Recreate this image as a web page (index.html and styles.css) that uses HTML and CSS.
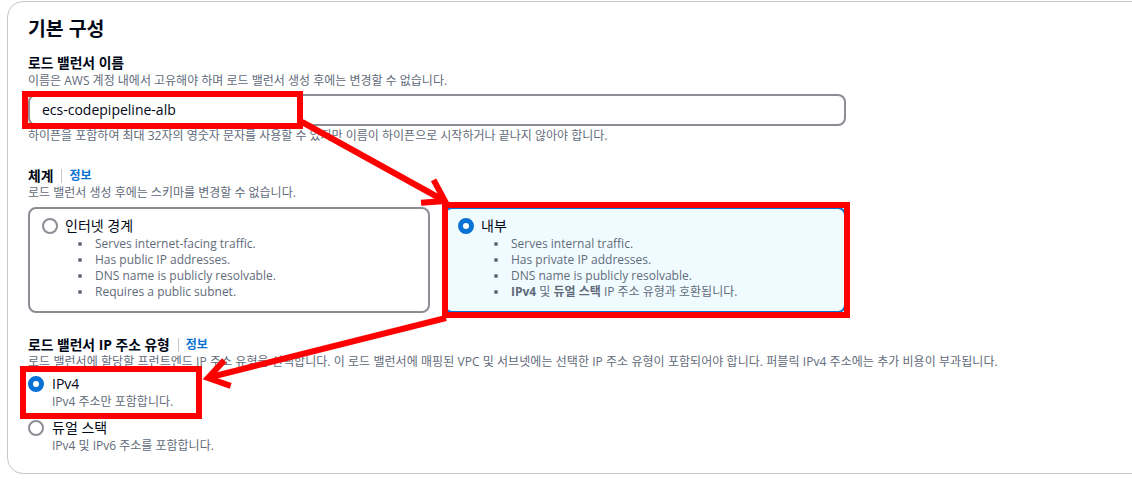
FILE: index.html
```html
<!DOCTYPE html>
<html lang="ko">
<head>
<meta charset="utf-8">
<title>기본 구성</title>
<link rel="stylesheet" href="styles.css">
</head>
<body>
<div class="panel">
  <h2 class="title">기본 구성</h2>

  <div class="field f1">
    <div class="label">로드 밸런서 이름</div>
    <div class="desc d1">이름은 AWS 계정 내에서 고유해야 하며 로드 밸런서 생성 후에는 변경할 수 없습니다.</div>
    <div class="input">ecs-codepipeline-alb</div>
    <div class="desc hint">하이픈을 포함하여 최대 32자의 영숫자 문자를 사용할 수 있지만 이름이 하이픈으로 시작하거나 끝나지 않아야 합니다.</div>
  </div>

  <div class="field f2">
    <div class="label">체계<span class="sep"></span><span class="info">정보</span></div>
    <div class="desc">로드 밸런서 생성 후에는 스키마를 변경할 수 없습니다.</div>
    <div class="tiles">
      <div class="tile">
        <div class="tile-head"><span class="radio"></span><span class="tile-title">인터넷 경계</span></div>
        <ul class="bul">
          <li>Serves internet-facing traffic.</li>
          <li>Has public IP addresses.</li>
          <li>DNS name is publicly resolvable.</li>
          <li>Requires a public subnet.</li>
        </ul>
      </div>
      <div class="tile sel">
        <div class="tile-head"><span class="radio on"></span><span class="tile-title">내부</span></div>
        <ul class="bul">
          <li>Serves internal traffic.</li>
          <li>Has private IP addresses.</li>
          <li>DNS name is publicly resolvable.</li>
          <li><span><b>IPv4</b> 및 <b>듀얼 스택</b> IP 주소 유형과 호환됩니다.</span></li>
        </ul>
      </div>
    </div>
  </div>

  <div class="field f3">
    <div class="label">로드 밸런서 IP 주소 유형<span class="sep"></span><span class="info">정보</span></div>
    <div class="desc wide">로드 밸런서에 할당할 프런트엔드 IP 주소 유형을 선택합니다. 이 로드 밸런서에 매핑된 VPC 및 서브넷에는 선택한 IP 주소 유형이 포함되어야 합니다. 퍼블릭 IPv4 주소에는 추가 비용이 부과됩니다.</div>
    <div class="opt first">
      <span class="radio on"></span>
      <span class="opt-title">IPv4</span>
      <span class="desc opt-desc">IPv4 주소만 포함합니다.</span>
    </div>
    <div class="opt">
      <span class="radio"></span>
      <span class="opt-title">듀얼 스택</span>
      <span class="desc opt-desc">IPv4 및 IPv6 주소를 포함합니다.</span>
    </div>
  </div>
</div>

<svg class="marks" width="1132" height="479" viewBox="0 0 1132 479" xmlns="http://www.w3.org/2000/svg">
  <g fill="none" stroke="#ff0000" stroke-width="6" stroke-linejoin="miter">
    <rect x="25" y="94" width="275" height="32"/>
    <rect x="445" y="205" width="402" height="110"/>
    <rect x="23" y="369" width="176" height="47"/>
    <line x1="302" y1="122" x2="443" y2="200"/>
    <polyline points="433.6,179.8 445,201 421,202.8"/>
    <line x1="446" y1="318" x2="211" y2="377"/>
    <polyline points="224.3,360.4 208,378 230.7,385.8"/>
  </g>
</svg>
</body>
</html>
```

FILE: styles.css
```css
html, body {
  margin: 0;
  background: #ffffff;
}

body {
  position: relative;
  width: 1132px;
  height: 479px;
  overflow: hidden;
  font-family: "Open Sans", "Noto Sans CJK KR", sans-serif;
  color: #000716;
}

.panel {
  margin: 1px 0 0 7px;
  width: 1180px;
  border: 1px solid #c6c6cd;
  border-radius: 16px;
  padding: 16px 20px 19px;
}

.title {
  margin: 0;
  font-size: 19.4px;
  line-height: 22px;
  font-weight: 700;
}

.label {
  display: flex;
  align-items: center;
  font-size: 13.8px;
  line-height: 18px;
  font-weight: 700;
  white-space: pre;
}

.f1 .label { margin-top: 14px; }
.f1 .d1 { margin-top: 1px; }
.f2 .label { margin-top: 23px; }
.f3 .label { margin-top: 23px; }

.sep {
  display: inline-block;
  width: 1px;
  height: 14px;
  background: #c6c6cd;
  margin: 0 7px 0 8px;
}

.info {
  color: #0972d3;
  font-size: 12px;
  font-weight: 700;
}

.desc {
  font-size: 12px;
  line-height: 16px;
  color: #5f6b7a;
  white-space: nowrap;
}

.desc.wide {
  letter-spacing: 0.06px;
}

.input {
  box-sizing: border-box;
  margin-top: 5px;
  width: 818px;
  height: 32px;
  border: 2px solid #8c8c94;
  border-radius: 8px;
  padding: 0 12px;
  font-size: 14px;
  line-height: 28px;
  color: #000716;
}

.hint { margin-top: 2px; }

.tiles {
  display: grid;
  grid-template-columns: 402px 402px;
  column-gap: 14px;
  margin-top: 6px;
}

.tile {
  border: 2px solid #8c8c94;
  border-radius: 8px;
  padding: 7px 12px 11px;
  background: #ffffff;
}

.tile.sel {
  border-color: #0972d3;
  background: #f0fbff;
}

.tile-head {
  display: flex;
  align-items: center;
  gap: 7px;
  height: 20px;
}

.tile-title {
  font-size: 14px;
  line-height: 20px;
  color: #000716;
}

.radio {
  box-sizing: border-box;
  display: block;
  flex: none;
  width: 16px;
  height: 16px;
  border-radius: 50%;
  border: 2px solid #8c8c94;
  background: #ffffff;
}

.radio.on {
  border: 5px solid #0972d3;
}

.bul {
  list-style: none;
  margin: 0;
  padding: 0 0 0 36px;
}

.bul li {
  display: flex;
  align-items: center;
  font-size: 12px;
  line-height: 16px;
  color: #5f6b7a;
  white-space: nowrap;
}

.bul li::before {
  content: "";
  flex: none;
  width: 4px;
  height: 4px;
  border-radius: 50%;
  background: #5f6b7a;
  margin-right: 13px;
}

.bul b {
  font-weight: 700;
}

.opt {
  display: grid;
  grid-template-columns: 16px auto;
  column-gap: 8px;
  margin-top: 8px;
}

.opt.first { margin-top: 4px; }

.opt .radio {
  grid-column: 1;
  grid-row: 1;
  align-self: center;
}

.opt-title {
  grid-column: 2;
  grid-row: 1;
  font-size: 14px;
  line-height: 20px;
  color: #000716;
}

.opt-desc {
  grid-column: 2;
  grid-row: 2;
}

.marks {
  position: absolute;
  left: 0;
  top: 0;
  pointer-events: none;
}
```
